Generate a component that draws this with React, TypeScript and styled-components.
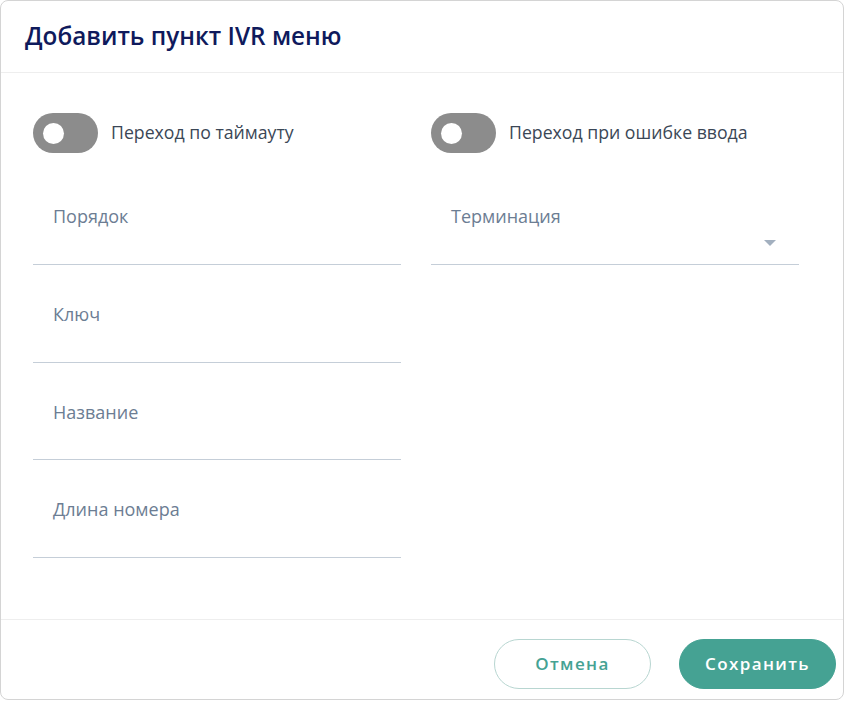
import React, { useState } from 'react';
import styled, { createGlobalStyle } from 'styled-components';

const GlobalStyle = createGlobalStyle`
  html, body {
    margin: 0;
    padding: 0;
    background: #ffffff;
    font-family: "Open Sans", "Noto Sans", sans-serif;
  }
  * { box-sizing: border-box; }
`;

const Dialog = styled.div`
  width: 844px;
  height: 700px;
  border: 1px solid #d4d4d4;
  border-radius: 8px;
  background: #fff;
  display: flex;
  flex-direction: column;
  overflow: hidden;
`;

const Header = styled.div`
  height: 72px;
  padding: 0 24px;
  display: flex;
  align-items: center;
  border-bottom: 1px solid #eeeeee;
  flex-shrink: 0;
`;

const Title = styled.h2`
  margin: 0;
  font-size: 24.3px;
  font-weight: 600;
  color: #0f1a5c;
  margin-top: -2px;
`;

const Body = styled.div`
  flex: 1;
  padding: 40px 44px 0 32px;
  display: grid;
  grid-template-columns: 368px 368px;
  column-gap: 30px;
  align-content: start;
`;

const Column = styled.div`
  display: flex;
  flex-direction: column;
`;

const ToggleRow = styled.label`
  display: flex;
  align-items: center;
  gap: 13px;
  height: 40px;
  margin-bottom: 14px;
  cursor: pointer;
`;

const Track = styled.span<{ $on: boolean }>`
  position: relative;
  width: 65px;
  height: 40px;
  border-radius: 20px;
  background: ${p => (p.$on ? '#45a293' : '#8c8c8c')};
  flex-shrink: 0;
  transition: background 0.2s;

  &::after {
    content: '';
    position: absolute;
    top: 9.5px;
    left: ${p => (p.$on ? '34px' : '10px')};
    width: 21px;
    height: 21px;
    border-radius: 50%;
    background: #fff;
    transition: left 0.2s;
  }
`;

const ToggleLabel = styled.span`
  font-size: 17.7px;
  color: #3b4756;
  margin-top: -2px;
`;

const Field = styled.div<{ $height: number }>`
  height: ${p => p.$height}px;
  padding: 0 20px;
  display: flex;
  flex-direction: column;
  border-bottom: 1px solid #c5ced8;
  position: relative;
`;

const FieldLabel = styled.span`
  font-size: 18px;
  color: #6c7d93;
  margin-top: 37px;
  line-height: 24px;
`;

const Caret = styled.span`
  position: absolute;
  right: 23px;
  bottom: 18px;
  width: 0;
  height: 0;
  border-left: 6px solid transparent;
  border-right: 6px solid transparent;
  border-top: 6px solid #a3b0bf;
`;

const Footer = styled.div`
  height: 80px;
  border-top: 1px solid #eeeeee;
  display: flex;
  align-items: center;
  justify-content: flex-end;
  gap: 28px;
  padding: 0 7px 0 0;
  flex-shrink: 0;
`;

const Button = styled.button<{ $primary?: boolean }>`
  width: 157px;
  height: 50px;
  border-radius: 25px;
  font-family: "Open Sans", "Noto Sans", sans-serif;
  font-size: 17px;
  font-weight: 600;
  letter-spacing: 1.4px;
  cursor: pointer;
  border: 1px solid ${p => (p.$primary ? '#45a293' : '#b8d6d1')};
  background: ${p => (p.$primary ? '#45a293' : '#ffffff')};
  color: ${p => (p.$primary ? '#ffffff' : '#45a293')};
  margin-top: 8px;
`;

const Toggle: React.FC<{ label: string }> = ({ label }) => {
  const [on, setOn] = useState(false);
  return (
    <ToggleRow onClick={() => setOn(!on)}>
      <Track $on={on} />
      <ToggleLabel>{label}</ToggleLabel>
    </ToggleRow>
  );
};

export default function App() {
  return (
    <>
      <GlobalStyle />
      <Dialog>
        <Header>
          <Title>Добавить пункт IVR меню</Title>
        </Header>
        <Body>
          <Column>
            <Toggle label="Переход по таймауту" />
            <Field $height={98}>
              <FieldLabel>Порядок</FieldLabel>
            </Field>
            <Field $height={98}>
              <FieldLabel>Ключ</FieldLabel>
            </Field>
            <Field $height={97}>
              <FieldLabel>Название</FieldLabel>
            </Field>
            <Field $height={98}>
              <FieldLabel>Длина номера</FieldLabel>
            </Field>
          </Column>
          <Column>
            <Toggle label="Переход при ошибке ввода" />
            <Field $height={98}>
              <FieldLabel>Терминация</FieldLabel>
              <Caret />
            </Field>
          </Column>
        </Body>
        <Footer>
          <Button>Отмена</Button>
          <Button $primary>Сохранить</Button>
        </Footer>
      </Dialog>
    </>
  );
}
